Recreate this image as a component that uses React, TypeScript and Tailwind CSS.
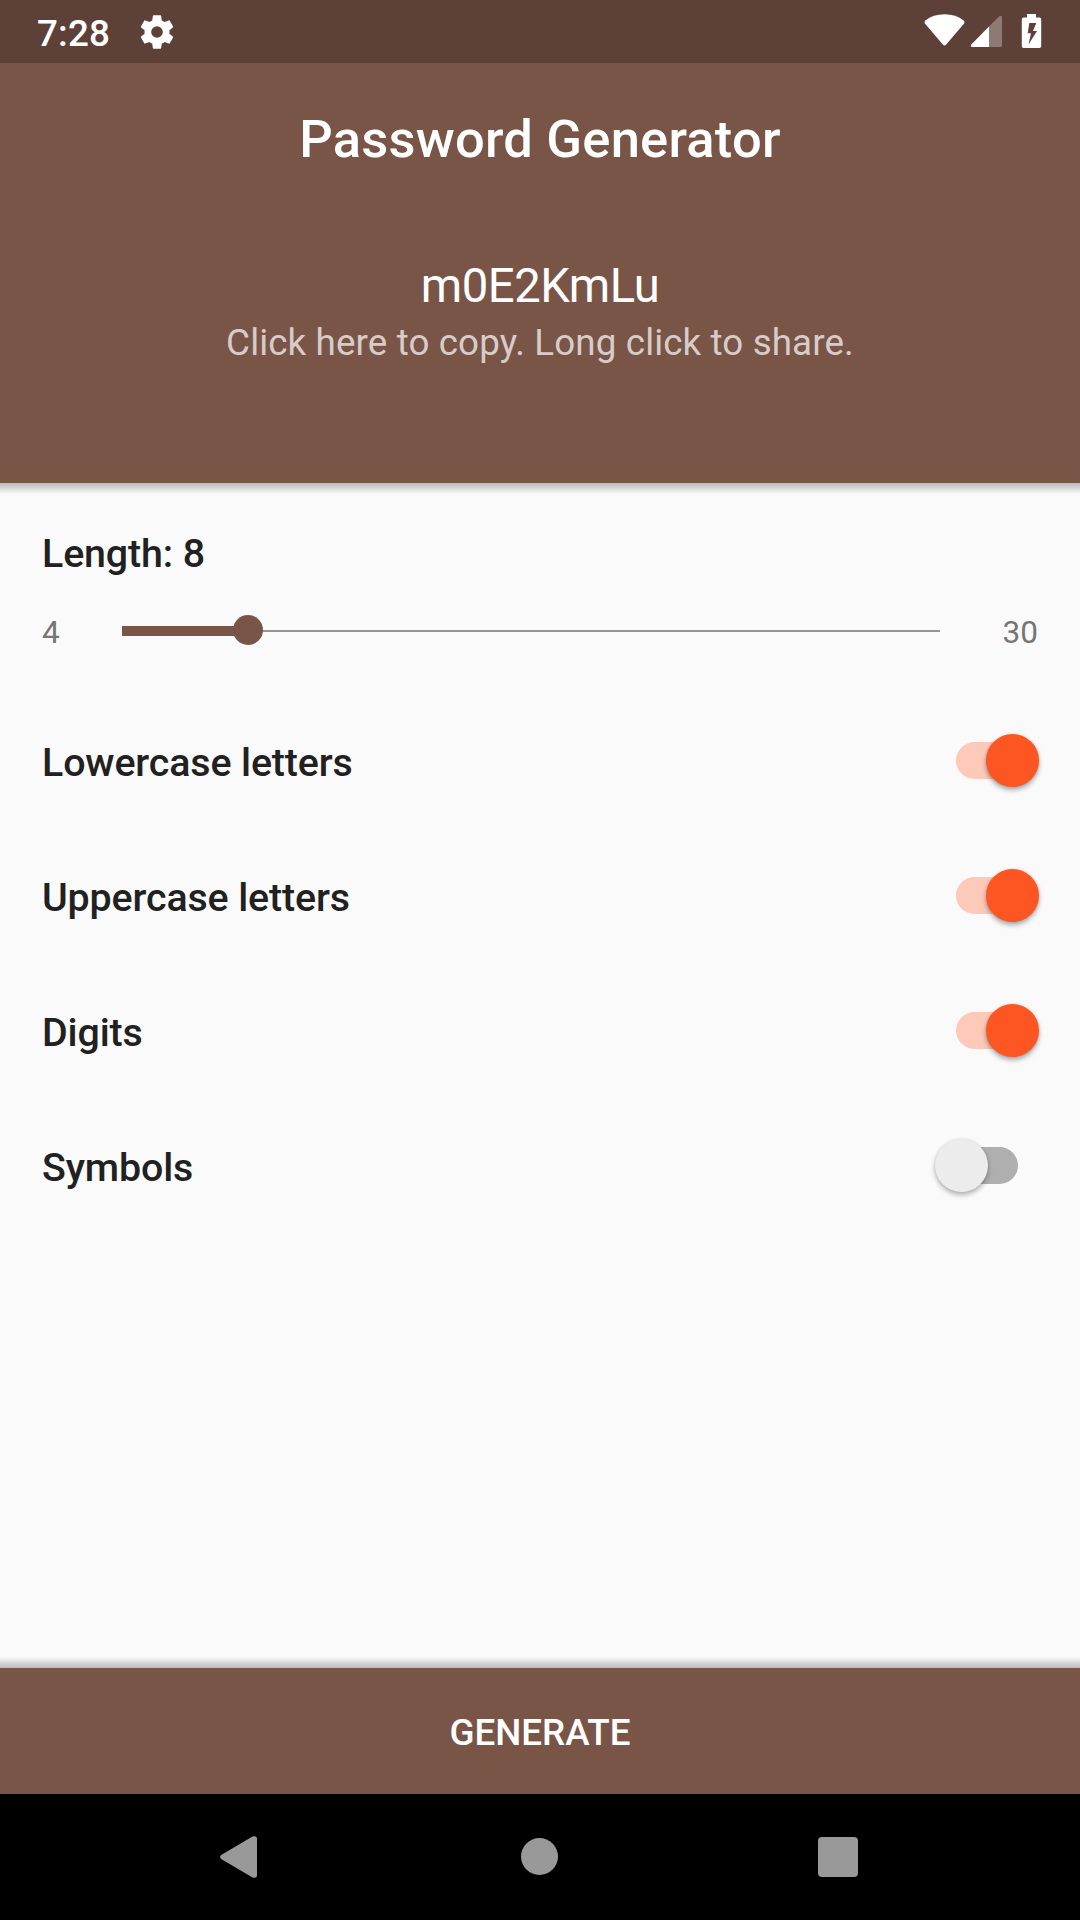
import React, { useState } from "react";

function StatusBar() {
  return (
    <div className="flex h-[63px] shrink-0 items-start bg-[#5d4037] pl-[37px] text-white">
      <span className="w-[72px] pt-[1px] text-[36.75px] font-medium leading-[65px] tracking-[0.15px]">7:28</span>
      <svg className="ml-[28px] mt-[12px] size-[40px]" viewBox="0 0 24 24" fill="currentColor">
        <path d="M19.43 12.98c.04-.32.07-.64.07-.98s-.03-.66-.07-.98l2.11-1.65c.19-.15.24-.42.12-.64l-2-3.46c-.12-.22-.39-.3-.61-.22l-2.49 1c-.52-.4-1.08-.73-1.69-.98l-.38-2.65C14.46 2.18 14.25 2 14 2h-4c-.25 0-.46.18-.49.42l-.38 2.65c-.61.25-1.17.59-1.69.98l-2.49-1c-.23-.09-.49 0-.61.22l-2 3.46c-.13.22-.07.49.12.64l2.11 1.65c-.04.32-.07.65-.07.98s.03.66.07.98l-2.11 1.65c-.19.15-.24.42-.12.64l2 3.46c.12.22.39.3.61.22l2.49-1c.52.4 1.08.73 1.69.98l.38 2.65c.03.24.24.42.49.42h4c.25 0 .46-.18.49-.42l.38-2.65c.61-.25 1.17-.59 1.69-.98l2.49 1c.23.09.49 0 .61-.22l2-3.46c.12-.22.07-.49-.12-.64zM12 15.5a3.5 3.5 0 1 1 0-7 3.5 3.5 0 0 1 0 7z" />
      </svg>
      <svg className="ml-auto mr-[32px] h-[63px] w-[130px]" viewBox="918 0 130 63" fill="currentColor">
        <path d="M925.4 20.4Q933 14.2 944.5 14.2T963.6 20.4Q965.3 21.8 964.1 23.4L946 44.8Q944.5 46.4 943 44.8L924.9 23.4Q923.7 21.8 925.4 20.4Z" />
        <path fillOpacity=".3" d="M989 26.6 998.8 16.7Q1002 14.4 1002 17.5V45.3Q1002 47 1000.3 47H989Z" />
        <path d="M989 26.6V47H972.4Q969.8 46.6 971.3 44.5Z" />
        <path fillRule="evenodd" d="M1027 14H1036V17.6H1039.4Q1041.2 17.6 1041.2 19.4V46.2Q1041.2 48 1039.4 48H1023.6Q1021.8 48 1021.8 46.2V19.4Q1021.8 17.6 1023.6 17.6H1027ZM1029.3 23 1027.7 33.3H1031L1028.5 44.5 1037 31H1033L1036.3 23Z" />
      </svg>
    </div>
  );
}

function Toggle({ on, onClick }: { on: boolean; onClick: () => void }) {
  return (
    <button
      onClick={onClick}
      className={
        on
          ? "relative mr-[7px] h-[37px] w-[77px] rounded-full bg-[#fdc9b9]"
          : "relative mr-[22px] h-[37px] w-[77px] rounded-full bg-[#afafaf]"
      }
    >
      <span
        className={
          on
            ? "absolute -top-2 left-[30px] size-[53px] rounded-full bg-[#fd5622] shadow-[0_3px_5px_rgba(0,0,0,0.32),0_0_3px_rgba(0,0,0,0.12)]"
            : "absolute -top-2 -left-[6px] size-[53px] rounded-full bg-[#ececec] shadow-[0_3px_5px_rgba(0,0,0,0.28),0_0_3px_rgba(0,0,0,0.1)]"
        }
      />
    </button>
  );
}

const options = ["Lowercase letters", "Uppercase letters", "Digits", "Symbols"];

export default function App() {
  const [enabled, setEnabled] = useState([true, true, true, false]);
  return (
    <div className="flex h-[1920px] w-[1080px] flex-col overflow-hidden bg-[#fafafa] font-['Roboto',sans-serif]">
      <StatusBar />
      <header className="flex h-[420px] shrink-0 flex-col items-center bg-[#795548] pt-[46px] text-white">
        <h1 className="text-[52.5px] font-medium leading-[60px] tracking-[0.23px]">Password Generator</h1>
        <div className="mt-[89px] text-[47.25px] leading-[56px] tracking-[-0.5px]">m0E2KmLu</div>
        <div className="mt-[7px] text-[36.75px] leading-[44px] tracking-[0.12px] text-[#d7ccc8]">
          Click here to copy. Long click to share.
        </div>
      </header>
      <div className="h-[11px] shrink-0 bg-linear-to-b from-[#bababa] to-[#fafafa]" />
      <main className="flex grow flex-col text-[#212121]">
        <div className="mt-[36px] pl-[42px] text-[39.375px] font-medium leading-[48px] tracking-[-0.13px]">Length: 8</div>
        <div className="mt-[29px] flex h-[48px] items-center px-[42px] text-[31.5px] text-[#757575]">
          <span className="w-[80px] pt-[3px]">4</span>
          <div className="relative flex h-[48px] w-[818px] items-center">
            <div className="h-[10px] w-[126px] bg-[#795548]" />
            <div className="h-[2px] grow bg-[#949494]" />
            <div className="absolute left-[111px] top-[8px] size-[30px] rounded-full bg-[#795548]" />
          </div>
          <span className="ml-auto pt-[3px]">30</span>
        </div>
        <div className="mt-[38px] flex flex-col">
          {options.map((label, i) => (
            <div key={label} className="flex h-[135px] items-center justify-between pl-[42px] pr-[40px]">
              <span className="pt-[4px] text-[39.375px] font-medium leading-[48px] tracking-[-0.13px]">{label}</span>
              <Toggle on={enabled[i]} onClick={() => setEnabled(enabled.map((v, k) => (k === i ? !v : v)))} />
            </div>
          ))}
        </div>
      </main>
      <div className="h-[11px] shrink-0 bg-linear-to-b from-[#fafafa] to-[#bababa]" />
      <button className="h-[126px] shrink-0 bg-[#795548] pt-[4px] text-[36.75px] font-medium text-white">GENERATE</button>
      <nav className="flex h-[126px] shrink-0 items-center bg-black pl-[220px] text-[#999999]">
        <svg className="h-[42px] w-[37px]" viewBox="0 0 37 42" fill="currentColor">
          <path d="M1.2 19.1 32.5.6Q37 -.8 37 3V39Q37 42.8 32.5 41.4L1.2 22.9Q-1 21 1.2 19.1Z" />
        </svg>
        <div className="mb-[1px] ml-[264px] size-[37px] rounded-full bg-[#999999]" />
        <div className="ml-[260px] size-[40px] rounded bg-[#999999]" />
      </nav>
    </div>
  );
}
